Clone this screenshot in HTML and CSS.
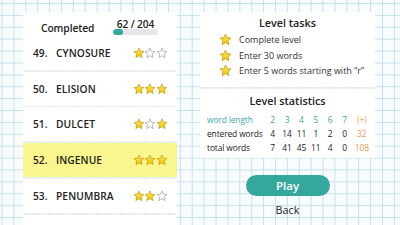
FILE: index.html
```html
<!DOCTYPE html>
<html lang="en">
<head>
<meta charset="utf-8">
<title>Level</title>
<link rel="stylesheet" href="styles.css">
</head>
<body>
<svg class="defs" width="0" height="0" aria-hidden="true">
  <defs>
    <linearGradient id="gold" x1="0" y1="0" x2="0" y2="1">
      <stop offset="0" stop-color="#ffe866"/>
      <stop offset="1" stop-color="#f2c400"/>
    </linearGradient>
    <symbol id="star-on" viewBox="0 0 24 24">
      <polygon points="12,2 14.9,8.6 22,9.3 16.6,14 18.2,21.5 12,17.6 5.8,21.5 7.4,14 2,9.3 9.1,8.6" fill="url(#gold)" stroke="#c79f12" stroke-width="1.6" stroke-linejoin="round"/>
    </symbol>
    <symbol id="star-off" viewBox="0 0 24 24">
      <polygon points="12,2 14.9,8.6 22,9.3 16.6,14 18.2,21.5 12,17.6 5.8,21.5 7.4,14 2,9.3 9.1,8.6" fill="#ffffff" stroke="#9c9c9c" stroke-width="1.4" stroke-linejoin="round"/>
    </symbol>
  </defs>
</svg>
<main class="screen">
  <section class="words">
    <header class="words-head">
      <span class="completed">Completed</span>
      <div class="progress">
        <span class="count">62 / 204</span>
        <div class="bar"><div class="fill" style="width:23%"></div></div>
      </div>
    </header>
    <ol class="list">
      <li class="row first"><span class="num">49.</span><span class="word">CYNOSURE</span><span class="stars"><svg><use href="#star-on"/></svg><svg><use href="#star-off"/></svg><svg><use href="#star-off"/></svg></span></li>
      <li class="row"><span class="num">50.</span><span class="word">ELISION</span><span class="stars"><svg><use href="#star-on"/></svg><svg><use href="#star-on"/></svg><svg><use href="#star-on"/></svg></span></li>
      <li class="row"><span class="num">51.</span><span class="word">DULCET</span><span class="stars"><svg><use href="#star-on"/></svg><svg><use href="#star-off"/></svg><svg><use href="#star-on"/></svg></span></li>
      <li class="row current"><span class="num">52.</span><span class="word">INGENUE</span><span class="stars"><svg><use href="#star-on"/></svg><svg><use href="#star-on"/></svg><svg><use href="#star-on"/></svg></span></li>
      <li class="row"><span class="num">53.</span><span class="word">PENUMBRA</span><span class="stars"><svg><use href="#star-on"/></svg><svg><use href="#star-on"/></svg><svg><use href="#star-off"/></svg></span></li>
      <li class="row blank"></li>
    </ol>
  </section>
  <section class="side">
    <div class="card tasks">
      <h2 class="title">Level tasks</h2>
      <ul class="task-list">
        <li class="task"><svg class="tstar"><use href="#star-on"/></svg>Complete level</li>
        <li class="task"><svg class="tstar"><use href="#star-on"/></svg>Enter 30 words</li>
        <li class="task"><svg class="tstar"><use href="#star-on"/></svg>Enter 5 words starting with “r”</li>
      </ul>
    </div>
    <div class="card stats">
      <h2 class="title">Level statistics</h2>
      <div class="table">
        <span class="lbl head">word length</span><span class="v head">2</span><span class="v head">3</span><span class="v head">4</span><span class="v head">5</span><span class="v head">6</span><span class="v head">7</span><span class="v plus">(+)</span>
        <span class="lbl">entered words</span><span class="v">4</span><span class="v">14</span><span class="v">11</span><span class="v">1</span><span class="v">2</span><span class="v">0</span><span class="v plus">32</span>
        <span class="lbl">total words</span><span class="v">7</span><span class="v">41</span><span class="v">45</span><span class="v">11</span><span class="v">4</span><span class="v">0</span><span class="v plus">108</span>
      </div>
    </div>
    <button class="play" type="button">Play</button>
    <button class="back" type="button">Back</button>
  </section>
</main>
</body>
</html>
```

FILE: styles.css
```css
* { box-sizing: border-box; }

html, body {
  margin: 0;
  padding: 0;
}

body {
  width: 400px;
  height: 225px;
  overflow: hidden;
  font-family: "Open Sans", "Noto Sans", sans-serif;
  color: #222;
  background-color: #f8fcfe;
  background-image:
    linear-gradient(to right, #c6e1ec 1px, transparent 1px),
    linear-gradient(to bottom, #c6e1ec 1px, transparent 1px);
  background-size: 11.9px 11.9px;
  background-position: 1.5px 3px;
}

.defs {
  display: block;
  width: 0;
  height: 0;
  overflow: hidden;
}

.screen {
  display: flex;
  padding: 12px 0 0 23px;
  height: 225px;
}

/* left word list */
.words {
  width: 154px;
  height: 213px;
  display: flex;
  flex-direction: column;
  overflow: hidden;
  background: rgba(228, 232, 235, 0.55);
}

.words-head {
  height: 31px;
  flex: none;
  display: flex;
  align-items: center;
  justify-content: space-between;
  background: #fff;
  padding: 0 19px 0 18px;
}

.completed {
  font-size: 10.3px;
  font-weight: 600;
  letter-spacing: -0.1px;
}

.progress {
  width: 45px;
  align-self: flex-start;
  padding-top: 6px;
  display: flex;
  flex-direction: column;
  align-items: center;
}

.count {
  font-size: 10.2px;
  font-weight: 600;
  line-height: 12px;
  letter-spacing: -0.1px;
}

.bar {
  width: 45px;
  height: 6px;
  margin-top: -1px;
  border-radius: 3px;
  background: #e4e8ea;
  overflow: hidden;
}

.fill {
  height: 100%;
  border-radius: 3px;
  background: #34a69c;
}

.list {
  list-style: none;
  margin: 0;
  padding: 1.75px 0 0;
  display: flex;
  flex-direction: column;
  gap: 1.75px;
  overflow: hidden;
  flex: 1;
}

.row {
  flex: none;
  height: 34px;
  display: flex;
  align-items: center;
  background: #fff;
  padding: 0 9px 0 10px;
  font-size: 10.2px;
  font-weight: 600;
}

.row.first { margin-top: -9px; }

.row.current { background: #f9f68e; }

.num { width: 23px; }

.word { letter-spacing: 0.1px; }

.stars {
  margin-left: auto;
  display: flex;
}

.stars svg {
  width: 11.8px;
  height: 11.8px;
}

/* right side */
.side {
  width: 175px;
  margin-left: 23px;
  display: flex;
  flex-direction: column;
  align-items: center;
  background: linear-gradient(rgba(228, 232, 235, 0.55), rgba(228, 232, 235, 0.55)) 0 0 / 100% 146px no-repeat;
}

.card {
  width: 100%;
  background: #fff;
}

.tasks {
  height: 75px;
  padding-top: 4px;
}

.stats {
  height: 69px;
  margin-top: 2px;
  padding-top: 5px;
}

.title {
  margin: 0;
  text-align: center;
  font-size: 10.8px;
  font-weight: 600;
  line-height: 14px;
}

.task-list {
  list-style: none;
  margin: 2px 0 0;
  padding: 0 0 0 19px;
}

.task {
  display: flex;
  align-items: center;
  gap: 7px;
  height: 15.5px;
  font-size: 9px;
  color: #333;
}

.tstar {
  width: 13px;
  height: 13px;
  flex: none;
}

.table {
  display: grid;
  grid-template-columns: 58.5px repeat(6, 14.4px) 20px;
  grid-auto-rows: 14px;
  align-items: center;
  margin-top: 4px;
  padding-left: 7px;
  font-size: 8.4px;
  color: #222;
}

.lbl {
  white-space: nowrap;
  letter-spacing: -0.1px;
}

.v { text-align: center; }

.head { color: #3aa8a2; }

.plus { color: #ee9d57; }

.play {
  margin-top: 17px;
  width: 84px;
  height: 21px;
  border: none;
  border-radius: 11px;
  background: #35a89e;
  color: #fff;
  font-family: inherit;
  font-size: 11.5px;
  font-weight: 600;
  padding: 0;
}

.back {
  margin-top: 7px;
  border: none;
  background: none;
  padding: 0;
  font-family: inherit;
  font-size: 10.8px;
  color: #222;
  line-height: 14px;
}
```
